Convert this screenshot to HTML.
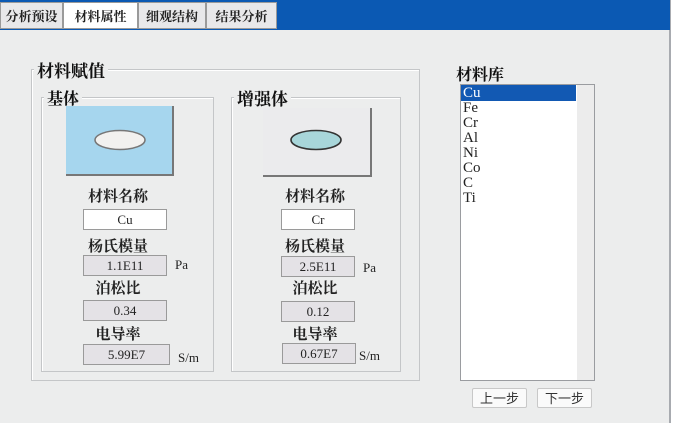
<!DOCTYPE html>
<html><head><meta charset="utf-8"><style>
*{margin:0;padding:0;box-sizing:border-box}
body{width:675px;height:427px;background:#fff;position:relative;overflow:hidden;font-family:"Liberation Serif","Noto Serif CJK SC",serif}
.a{position:absolute}
.bg{left:0;top:0;width:671px;height:423px;background:#eceded;border-right:2px solid #a8abb0}
.bar{left:0;top:0;width:670px;height:30px;background:#0b59b3}
.tab{top:2px;height:27px;background:#e8e8ea;border:1px solid #9a9a9a;font:bold 13px "Noto Serif CJK SC",serif;color:#222;text-align:center;line-height:26px}
.grp{border:1px solid #c4c6c8;box-shadow:1px 1px 0 #fff inset}
.lbl{background:#eceded;font:bold 16px "Noto Serif CJK SC",serif;color:#111;padding:0 3px;line-height:18px}
.t{font:bold 15px "Noto Serif CJK SC",serif;color:#222;text-align:center;width:120px;line-height:18px}
.box{height:21px;border:1px solid #9a9a9a;background:#e4e2e6;font-size:13px;text-align:center;line-height:19px;color:#222}
.w{background:#fff}
.u{font-size:13px;color:#222}
.li{left:462px;font-size:15px;line-height:15px;color:#222;padding-left:1px}
.btn{top:388px;height:20px;width:55px;background:#fafafa;border:1px solid #c8c8c8;border-radius:2px;font:13px "Noto Sans CJK SC",sans-serif;color:#333;text-align:center;line-height:18px}
</style></head><body>
<div class="a bg"></div>
<div class="a bar"></div>
<div class="a tab" style="left:0;width:63px">分析预设</div>
<div class="a tab" style="left:63px;width:75px;background:#fff">材料属性</div>
<div class="a tab" style="left:138px;width:68px">细观结构</div>
<div class="a tab" style="left:206px;width:71px">结果分析</div>

<div class="a grp" style="left:31px;top:69px;width:389px;height:312px"></div>
<div class="a lbl" style="left:34px;top:61px;font-size:17px">材料赋值</div>

<div class="a grp" style="left:41px;top:97px;width:173px;height:275px"></div>
<div class="a lbl" style="left:44px;top:89px">基体</div>
<div class="a" style="left:66px;top:106px;width:108px;height:70px;background:#a6d6ee;border-right:2px solid #777;border-bottom:2px solid #777"></div>
<svg class="a" style="left:90px;top:127px" width="60" height="26"><ellipse cx="30" cy="13" rx="25" ry="9.5" fill="#f2f1ef" stroke="#777" stroke-width="1.5"/></svg>

<div class="a grp" style="left:231px;top:97px;width:170px;height:275px"></div>
<div class="a lbl" style="left:234px;top:89px;font-size:17px">增强体</div>
<div class="a" style="left:263px;top:108px;width:109px;height:69px;background:#ebebed;border-right:2px solid #777;border-bottom:2px solid #777"></div>
<svg class="a" style="left:286px;top:127px" width="60" height="26"><ellipse cx="30" cy="13" rx="25" ry="9.5" fill="#a8d6da" stroke="#333" stroke-width="1.6"/></svg>

<div class="a t" style="left:58px;top:187px">材料名称</div>
<div class="a box w" style="left:83px;top:209px;width:84px">Cu</div>
<div class="a t" style="left:58px;top:237px">杨氏模量</div>
<div class="a box" style="left:83px;top:255px;width:84px">1.1E11</div>
<div class="a u" style="left:175px;top:257px">Pa</div>
<div class="a t" style="left:58px;top:279px">泊松比</div>
<div class="a box" style="left:83px;top:300px;width:84px">0.34</div>
<div class="a t" style="left:58px;top:325px">电导率</div>
<div class="a box" style="left:83px;top:344px;width:87px">5.99E7</div>
<div class="a u" style="left:178px;top:350px">S/m</div>

<div class="a t" style="left:255px;top:187px">材料名称</div>
<div class="a box w" style="left:281px;top:209px;width:74px">Cr</div>
<div class="a t" style="left:255px;top:237px">杨氏模量</div>
<div class="a box" style="left:281px;top:256px;width:74px">2.5E11</div>
<div class="a u" style="left:363px;top:260px">Pa</div>
<div class="a t" style="left:255px;top:279px">泊松比</div>
<div class="a box" style="left:281px;top:301px;width:74px">0.12</div>
<div class="a t" style="left:255px;top:325px">电导率</div>
<div class="a box" style="left:282px;top:343px;width:74px">0.67E7</div>
<div class="a u" style="left:359px;top:348px">S/m</div>

<div class="a lbl" style="left:454px;top:65px;padding:0 2px">材料库</div>
<div class="a" style="left:460px;top:84px;width:135px;height:297px;background:#fff;border:1px solid #9a9ca0"></div>
<div class="a" style="left:577px;top:85px;width:17px;height:295px;background:#ececec"></div>
<div class="a" style="left:461px;top:85px;width:115px;height:16px;background:#1259b3"></div>
<div class="a li" style="top:86px;color:#fff">Cu</div>
<div class="a li" style="top:101px">Fe</div>
<div class="a li" style="top:116px">Cr</div>
<div class="a li" style="top:131px">Al</div>
<div class="a li" style="top:146px">Ni</div>
<div class="a li" style="top:161px">Co</div>
<div class="a li" style="top:176px">C</div>
<div class="a li" style="top:191px">Ti</div>
<div class="a btn" style="left:472px">上一步</div>
<div class="a btn" style="left:537px">下一步</div>
</body></html>
